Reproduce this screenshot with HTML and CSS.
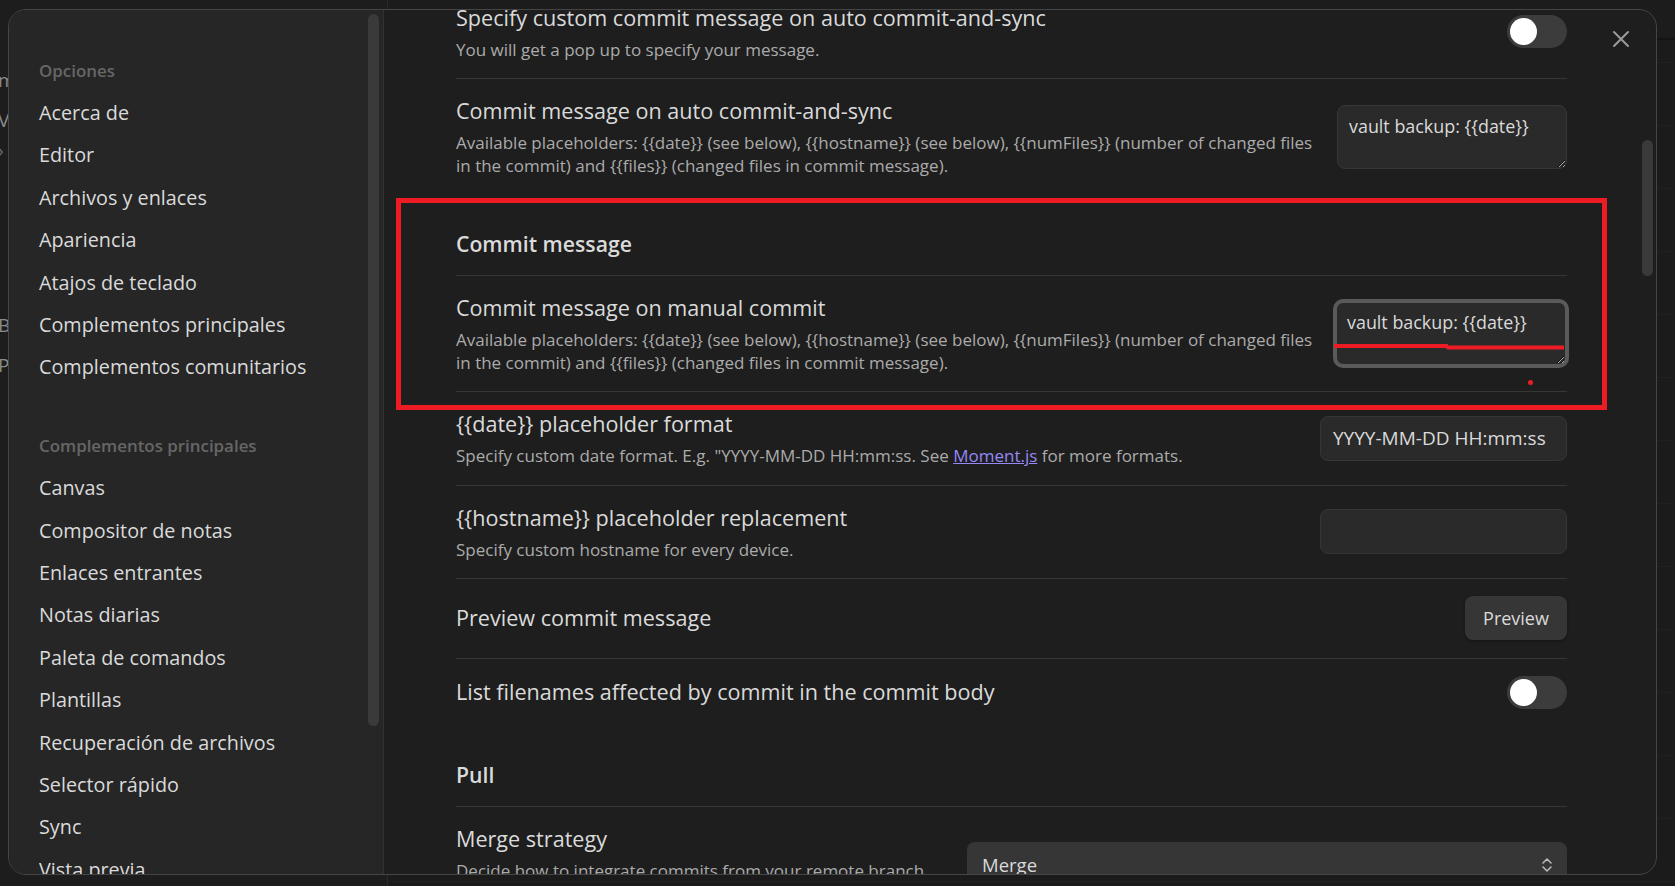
FILE: index.html
```html
<!DOCTYPE html>
<html lang="es">
<head>
<meta charset="utf-8">
<title>Opciones</title>
<link rel="stylesheet" href="styles.css">
</head>
<body>
<div class="app">
  <div class="app-left">
    <div class="frag">m</div>
    <div class="frag">Va</div>
    <div class="frag chev-frag">›</div>
    <div class="frag gap">Bi</div>
    <div class="frag">Pa</div>
  </div>
  <div class="app-main">
    <div class="app-top"></div>
  </div>
</div>

<div class="modal">
  <nav class="sidebar">
    <div class="nav-group">
      <div class="nav-title">Opciones</div>
      <div class="nav-item">Acerca de</div>
      <div class="nav-item">Editor</div>
      <div class="nav-item">Archivos y enlaces</div>
      <div class="nav-item">Apariencia</div>
      <div class="nav-item">Atajos de teclado</div>
      <div class="nav-item">Complementos principales</div>
      <div class="nav-item">Complementos comunitarios</div>
    </div>
    <div class="nav-group">
      <div class="nav-title">Complementos principales</div>
      <div class="nav-item">Canvas</div>
      <div class="nav-item">Compositor de notas</div>
      <div class="nav-item">Enlaces entrantes</div>
      <div class="nav-item">Notas diarias</div>
      <div class="nav-item">Paleta de comandos</div>
      <div class="nav-item">Plantillas</div>
      <div class="nav-item">Recuperación de archivos</div>
      <div class="nav-item">Selector rápido</div>
      <div class="nav-item">Sync</div>
      <div class="nav-item">Vista previa</div>
    </div>
    <div class="thumb sidebar-thumb"></div>
  </nav>

  <section class="content">
    <div class="settings">
      <div class="setting">
        <div class="info">
          <div class="name">Specify custom commit message on auto commit-and-sync</div>
          <div class="desc">You will get a pop up to specify your message.</div>
        </div>
        <div class="control"><div class="toggle"><span class="knob"></span></div></div>
      </div>

      <div class="setting">
        <div class="info">
          <div class="name">Commit message on auto commit-and-sync</div>
          <div class="desc">Available placeholders: {{date}} (see below), {{hostname}} (see below), {{numFiles}} (number of changed files<br>in the commit) and {{files}} (changed files in commit message).</div>
        </div>
        <div class="control"><textarea class="textarea" spellcheck="false">vault backup: {{date}}</textarea></div>
      </div>

      <div class="setting heading">
        <div class="info"><div class="name">Commit message</div></div>
      </div>

      <div class="setting">
        <div class="info">
          <div class="name">Commit message on manual commit</div>
          <div class="desc">Available placeholders: {{date}} (see below), {{hostname}} (see below), {{numFiles}} (number of changed files<br>in the commit) and {{files}} (changed files in commit message).</div>
        </div>
        <div class="control"><textarea class="textarea focused" spellcheck="false">vault backup: {{date}}</textarea></div>
      </div>

      <div class="setting">
        <div class="info">
          <div class="name">{{date}} placeholder format</div>
          <div class="desc">Specify custom date format. E.g. "YYYY-MM-DD HH:mm:ss. See <a class="link" href="#">Moment.js</a> for more formats.</div>
        </div>
        <div class="control"><div class="input">YYYY-MM-DD HH:mm:ss</div></div>
      </div>

      <div class="setting">
        <div class="info">
          <div class="name">{{hostname}} placeholder replacement</div>
          <div class="desc">Specify custom hostname for every device.</div>
        </div>
        <div class="control"><div class="input"></div></div>
      </div>

      <div class="setting">
        <div class="info">
          <div class="name">Preview commit message</div>
        </div>
        <div class="control"><button class="button">Preview</button></div>
      </div>

      <div class="setting">
        <div class="info">
          <div class="name">List filenames affected by commit in the commit body</div>
        </div>
        <div class="control"><div class="toggle"><span class="knob"></span></div></div>
      </div>

      <div class="setting heading">
        <div class="info"><div class="name">Pull</div></div>
      </div>

      <div class="setting">
        <div class="info">
          <div class="name">Merge strategy</div>
          <div class="desc">Decide how to integrate commits from your remote branch<br>into your local branch.</div>
        </div>
        <div class="control">
          <div class="dropdown">
            <span>Merge</span>
            <svg class="chev" width="12" height="16" viewBox="0 0 12 16"><path d="M2 6 L6 2 L10 6 M2 10 L6 14 L10 10" fill="none" stroke="#bdbdbd" stroke-width="1.5" stroke-linecap="round" stroke-linejoin="round"/></svg>
          </div>
        </div>
      </div>
    </div>
    <div class="thumb content-thumb"></div>
  </section>

  <button class="close" aria-label="Cerrar">
    <svg width="18" height="18" viewBox="0 0 18 18"><path d="M2 2 L16 16 M16 2 L2 16" stroke="#9a9a9a" stroke-width="2" stroke-linecap="round"/></svg>
  </button>
</div>

<div class="annot-box"></div>
<svg class="annot-line" width="230" height="8" viewBox="0 0 230 8"><path d="M0 3 H114" stroke="#ed1c24" stroke-width="4"/><path d="M114 4.5 H229" stroke="#ed1c24" stroke-width="4" stroke-linecap="round"/></svg>
<div class="annot-dot"></div>
</body>
</html>
```

FILE: styles.css
```css
* { box-sizing: border-box; }

html, body {
  margin: 0;
  width: 1675px;
  height: 886px;
  overflow: hidden;
  background: #161616;
  font-family: "Open Sans", "Noto Sans", sans-serif;
  color: #dadada;
}

/* underlying app (behind the modal) */
.app {
  display: flex;
  height: 100%;
}
.app-left {
  width: 388px;
  background: #1d1d1d;
  border-right: 1px solid #2a2a2a;
  padding-top: 60px;
}
.frag {
  font-size: 19px;
  line-height: 40px;
  color: #8a8a8a;
  margin-left: -2px;
}
.frag.chev-frag { line-height: 20px; color: #6a6a6a; }
.frag.gap { margin-top: 145px; }
.app-main {
  flex: 1;
  background: repeating-linear-gradient(180deg, #1b1b1b 0 62px, #202020 62px 63px);
}
.app-top {
  height: 40px;
  background: #1c1c1c;
  border-bottom: 2px solid #131313;
}

/* modal */
.modal {
  position: absolute;
  left: 8px;
  top: 9px;
  width: 1649px;
  height: 866px;
  border: 1px solid #454545;
  border-radius: 18px;
  background: #1e1e1e;
  overflow: hidden;
  display: flex;
}

.sidebar {
  position: relative;
  width: 375px;
  flex: none;
  background: #262626;
  border-right: 1px solid #323232;
  padding: 39px 0 0 30px;
}
.nav-group + .nav-group { margin-top: 36px; }
.nav-title {
  height: 42.4px;
  display: flex;
  align-items: center;
  font-size: 16.9px;
  font-weight: 600;
  color: #666666;
}
.nav-item {
  height: 42.4px;
  display: flex;
  align-items: center;
  font-size: 19.8px;
  color: #dadada;
}

.thumb {
  position: absolute;
  background: #3a3a3a;
  border-radius: 6px;
}
.sidebar-thumb { top: 4px; right: 4px; width: 11px; height: 712px; }

.content {
  position: relative;
  flex: 1;
  overflow: hidden;
  padding: 0 89px 0 72px;
}
.content-thumb { top: 130px; right: 3px; width: 11px; height: 136px; }

.settings { margin-top: -25.5px; }

.setting {
  display: flex;
  align-items: center;
  gap: 24px;
  padding: 17.25px 0;
  border-top: 1px solid #363636;
}
.setting.heading {
  border-top: none;
  padding: 34px 0 16px;
}
.setting.heading .name { font-weight: 600; font-size: 21.2px; }

.info { flex: 1; min-width: 0; }
.name {
  font-size: 21.6px;
  line-height: 30px;
  color: #dadada;
  white-space: nowrap;
}
.desc {
  margin-top: 5px;
  font-size: 17px;
  line-height: 23px;
  color: #ababab;
  white-space: nowrap;
}
.link { color: #9588f7; text-decoration: underline; }

.control { flex: none; display: flex; justify-content: flex-end; }

.toggle {
  width: 60px;
  height: 33px;
  border-radius: 17px;
  background: #3c3c3c;
  padding: 3px;
}
.knob {
  display: block;
  width: 27px;
  height: 27px;
  border-radius: 50%;
  background: #ffffff;
}

.textarea {
  display: block;
  width: 230px;
  height: 64px;
  margin: 0;
  padding: 8px 11px;
  background: #2a2a2a;
  border: 1px solid #363636;
  border-radius: 8px;
  color: #dadada;
  font-family: inherit;
  font-size: 17.9px;
  line-height: 24px;
  resize: vertical;
  outline: none;
  color-scheme: dark;
}
.textarea.focused {
  width: 232px;
  height: 65px;
  padding: 7px 10px;
  border: 2px solid #5a5a5a;
  box-shadow: 0 0 0 2px #5a5a5a;
}

.input {
  width: 247px;
  height: 45px;
  padding: 0 12px;
  display: flex;
  align-items: center;
  background: #2a2a2a;
  border: 1px solid #363636;
  border-radius: 8px;
  font-size: 19px;
  color: #dadada;
}

.button {
  width: 102px;
  height: 44px;
  border: none;
  border-radius: 8px;
  background: #363636;
  box-shadow: 0 1px 3px rgba(0, 0, 0, 0.35);
  font-family: inherit;
  font-size: 18px;
  color: #dadada;
}

.dropdown {
  width: 600px;
  height: 45px;
  display: flex;
  align-items: center;
  justify-content: space-between;
  padding: 0 14px 0 15px;
  background: #363636;
  border-radius: 8px;
  font-size: 18.5px;
  color: #dadada;
}

.close {
  position: absolute;
  top: 13px;
  right: 19px;
  width: 32px;
  height: 32px;
  padding: 0;
  border: none;
  background: transparent;
  display: flex;
  align-items: center;
  justify-content: center;
}

/* red annotations drawn over the screenshot */
.annot-box {
  position: absolute;
  left: 396px;
  top: 198px;
  width: 1211px;
  height: 212px;
  border: 5px solid #ed1c24;
}
.annot-line { position: absolute; left: 1334px; top: 343px; }
.annot-dot {
  position: absolute;
  left: 1528px;
  top: 380px;
  width: 5px;
  height: 5px;
  border-radius: 50%;
  background: #ed1c24;
}
```
